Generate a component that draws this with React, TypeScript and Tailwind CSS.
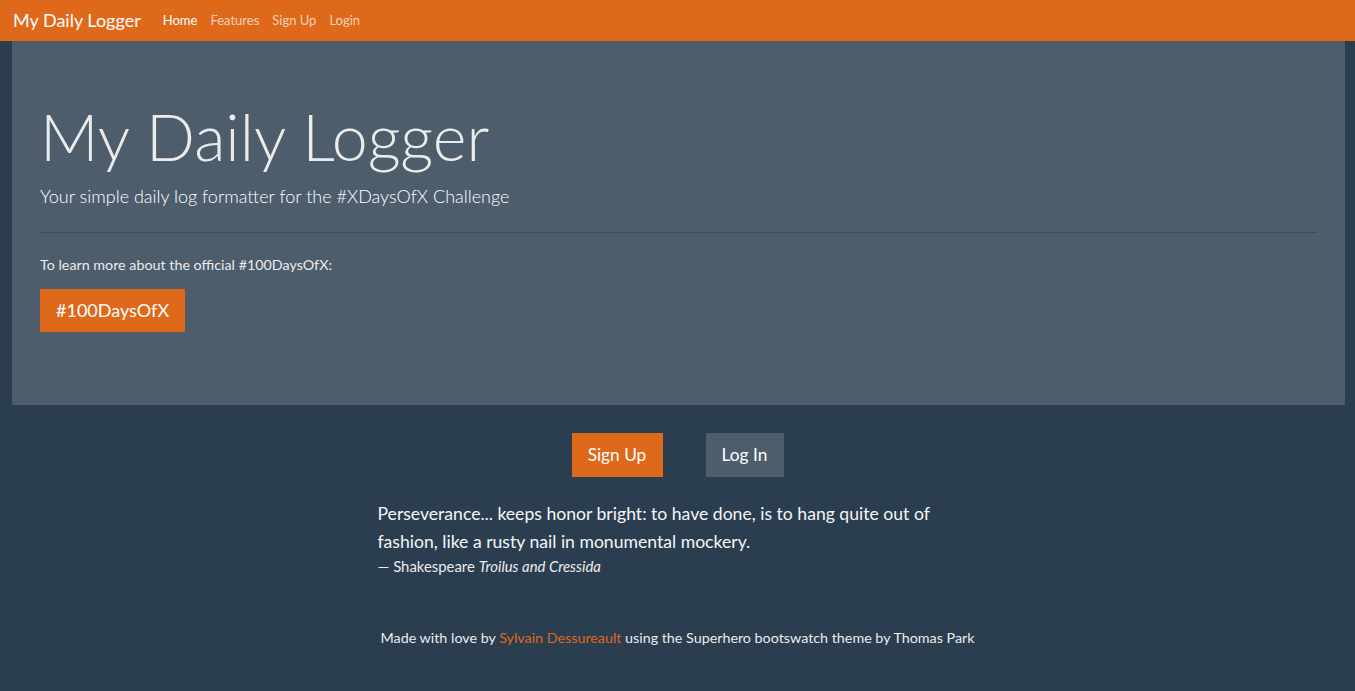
import React from "react";

export default function App() {
  return (
    <div className="min-h-[691px] bg-[#2B3E50] text-[#EBEBEB]" style={{ fontFamily: "Lato, 'Liberation Sans', sans-serif" }}>
      <nav className="flex h-[41px] items-center bg-[#DF691A] px-[13px]">
        <span className="mr-[22px] text-[18px] text-white">My Daily Logger</span>
        <div className="flex gap-[13px] text-[13px]">
          <span className="text-white">Home</span>
          <span className="text-white/70">Features</span>
          <span className="text-white/70">Sign Up</span>
          <span className="text-white/70">Login</span>
        </div>
      </nav>
      <div className="ml-[12px] mr-[10px] bg-[#4E5D6C] px-[28px] pt-[56px] pb-[73px]">
        <h1 className="text-[64.5px] font-light leading-[78px]">My Daily Logger</h1>
        <p className="mt-[8px] text-[18px] font-light leading-[27px] text-white">Your simple daily log formatter for the #XDaysOfX Challenge</p>
        <hr className="mt-[22px] mb-[21px] border-t border-[#3f4d5b]" />
        <p className="text-[14.3px] leading-[21px]">To learn more about the official #100DaysOfX:</p>
        <button className="mt-[14px] h-[43px] bg-[#DF691A] px-[16px] text-[18px] text-white">#100DaysOfX</button>
      </div>
      <div className="mt-[28px] flex justify-center gap-[43px]">
        <button className="h-[44px] w-[91px] bg-[#DF691A] text-[17.3px] text-white">Sign Up</button>
        <button className="h-[44px] w-[78px] bg-[#4E5D6C] text-[17.3px] text-white">Log In</button>
      </div>
      <div className="mx-auto mt-[23px] w-[600px]">
        <p className="text-[17.6px] leading-[28px] text-[#f5f5f5]">Perseverance... keeps honor bright: to have done, is to hang quite out of fashion, like a rusty nail in monumental mockery.</p>
        <p className="text-[14.9px] leading-[20px]">— Shakespeare <i>Troilus and Cressida</i></p>
      </div>
      <p className="mt-[51px] text-center text-[14.3px] leading-[21px]">
        Made with love by <span className="text-[#DF691A]">Sylvain Dessureault</span> using the Superhero bootswatch theme by Thomas Park
      </p>
    </div>
  );
}
